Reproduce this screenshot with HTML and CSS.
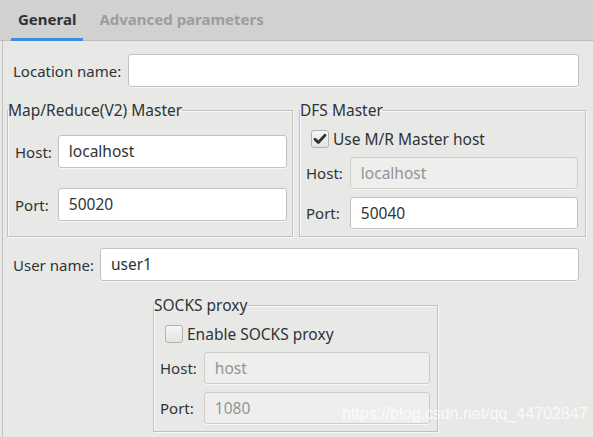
FILE: index.html
```html
<!DOCTYPE html>
<html>
<head>
<meta charset="utf-8">
<link rel="stylesheet" href="styles.css">
</head>
<body>
<div class="window">
  <div class="tabs">
    <div class="tab active">General</div>
    <div class="tab">Advanced parameters</div>
  </div>
  <div class="content">
    <div class="row row-loc">
      <span class="lbl">Location name:</span>
      <div class="field"></div>
    </div>

    <div class="groups">
      <fieldset class="group">
        <legend>Map/Reduce(V2) Master</legend>
        <div class="inner inner-mr">
          <div class="form form-mr">
            <span class="lbl">Host:</span><div class="field">localhost</div>
            <span class="lbl">Port:</span><div class="field">50020</div>
          </div>
        </div>
      </fieldset>
      <fieldset class="group">
        <legend>DFS Master</legend>
        <div class="inner">
          <div class="check">
            <span class="box"><svg width="14" height="14" viewBox="0 0 14 14"><path d="M2 7.2 L5.3 10.5 L12 3.2" fill="none" stroke="#2e3436" stroke-width="2.8" stroke-linecap="round" stroke-linejoin="round"/></svg></span>
            <span>Use M/R Master host</span>
          </div>
          <div class="form">
            <span class="lbl">Host:</span><div class="field disabled">localhost</div>
            <span class="lbl">Port:</span><div class="field small">50040</div>
          </div>
        </div>
      </fieldset>
    </div>

    <div class="row row-user">
      <span class="lbl">User name:</span>
      <div class="field">user1</div>
    </div>

    <fieldset class="group socks">
      <legend>SOCKS proxy</legend>
      <div class="inner">
        <div class="check">
          <span class="box"></span>
          <span>Enable SOCKS proxy</span>
        </div>
        <div class="form">
          <span class="lbl">Host:</span><div class="field disabled">host</div>
          <span class="lbl">Port:</span><div class="field disabled">1080</div>
        </div>
      </div>
    </fieldset>
  </div>
  <div class="watermark">https://blog.csdn.net/qq_44702847</div>
</div>
</body>
</html>
```
FILE: styles.css
```css
* { box-sizing: border-box; }
html, body { margin: 0; padding: 0; }
body {
  width: 593px;
  height: 437px;
  overflow: hidden;
  background: #e8e8e7;
  font-family: "Noto Sans", "Open Sans", sans-serif;
  font-size: 15px;
  color: #2e3436;
}
.window {
  position: relative;
  height: 437px;
  display: flex;
  flex-direction: column;
}
.tabs {
  height: 41px;
  background: #d1d1d1;
  border-bottom: 1px solid #bdbdbd;
  display: flex;
  padding-left: 11px;
  flex-shrink: 0;
}
.tab {
  height: 41px;
  padding: 0 7px;
  line-height: 39px;
  font-weight: bold;
  color: #9d9d9d;
  margin-right: 9px;
}
.tab.active {
  color: #2e3436;
  box-shadow: inset 0 -3px 0 #3d8ee2;
}
.content {
  flex: 1;
  margin-left: 2px;
  border-left: 1px solid #c2c2c2;
  padding: 13px 14px 0 10px;
  display: flex;
  flex-direction: column;
}
.row {
  display: flex;
  align-items: center;
  gap: 7px;
}
.row-user { gap: 6px; margin-top: 11px; }
.row .field { flex: 1; }
.lbl { color: #2e3436; white-space: nowrap; }
.field {
  height: 33px;
  background: #fff;
  border: 1px solid #c1c1bf;
  border-radius: 3px;
  padding: 0 10px;
  line-height: 31px;
  color: #2e3436;
  font-size: 15.5px;
  box-shadow: 0 1px 0 rgba(255,255,255,0.6);
}
.field.small { height: 32px; line-height: 30px; }
.field.disabled {
  height: 32px;
  line-height: 30px;
  background: #eeeeed;
  border-color: #cdcdcb;
  color: #929595;
}
.groups {
  display: grid;
  grid-template-columns: 286px 287px;
  column-gap: 6px;
  margin: 13px -6px 0 -6px;
}
fieldset.group {
  margin: 0;
  padding: 0;
  min-width: 0;
  border: 1px solid #c0c0be;
  box-shadow: 1px 1px 0 #f8f8f8, inset 1px 1px 0 #f8f8f8;
}
legend {
  padding: 0;
  margin: 0;
  line-height: 20px;
  height: 20px;
  font-size: 15.5px;
  color: #2e3436;
}
.inner {
  padding: 9px 7px 7px 6px;
}
.inner-mr { padding: 15px 5px 14px 7px; }
.form {
  display: grid;
  grid-template-columns: auto 1fr;
  column-gap: 7px;
  row-gap: 8px;
  align-items: center;
}
.form-mr { row-gap: 20px; column-gap: 6px; }
.check {
  display: flex;
  align-items: center;
  gap: 4px;
  height: 20px;
  margin-left: 5px;
  margin-bottom: 8px;
  font-size: 15.5px;
}
.box {
  width: 18px;
  height: 18px;
  border: 1px solid #b3b3b0;
  border-radius: 3px;
  background: linear-gradient(#f6f6f5, #e3e3e1);
  display: flex;
  align-items: center;
  justify-content: center;
}
.socks {
  width: 285px;
  align-self: flex-start;
  margin: 14px 0 0 140px !important;
}
.watermark {
  position: absolute;
  left: 342px;
  top: 405px;
  font-family: "Liberation Sans", Arial, sans-serif;
  font-size: 16px;
  color: rgba(255,255,255,0.8);
  white-space: nowrap;
}
```
